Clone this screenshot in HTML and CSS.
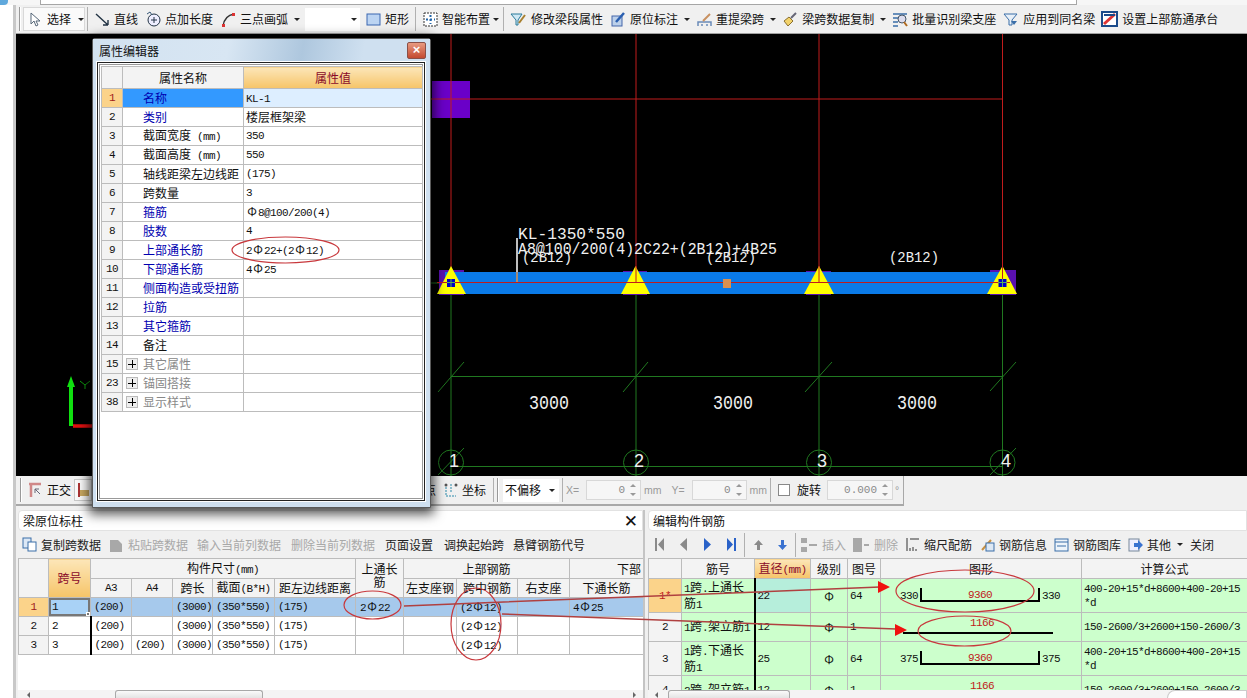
FILE: index.html
```html
<!DOCTYPE html>
<html lang="zh">
<head>
<meta charset="utf-8">
<title>属性编辑器</title>
<link rel="stylesheet" href="styles.css">
</head>
<body>
<div class="app">
  <div class="top"><span class="orb"></span><span class="topbox"></span></div>
  <div class="main">
    <div class="side"></div>
    <div class="content">

      <div class="tb">
        <span class="handle"></span>
        <span class="btn-select">
          <svg width="12" height="15" viewBox="0 0 12 15"><path d="M2 1v11l3-3 2 5 2-1-2-4h4z" fill="#fff" stroke="#567" /></svg>
          <span>选择</span><span class="caret"></span>
        </span>
        <span class="sep s1"></span>
        <span class="ti s0"><svg width="15" height="15" viewBox="0 0 15 15"><path d="M1 2l12 11M13 13V8M13 13H8" fill="none" stroke="#234" stroke-width="1.4"/></svg>直线</span>
        <span class="ti m8"><svg width="15" height="16" viewBox="0 0 15 16"><circle cx="8" cy="9" r="6" fill="#eef" stroke="#234"/><path d="M8 6v6M5 9h6" stroke="#234"/><path d="M1 3l3-2 2 3" fill="none" stroke="#357"/></svg>点加长度</span>
        <span class="ti m8"><svg width="15" height="15" viewBox="0 0 15 15"><path d="M2 14C3 7 7 3 13 2" fill="none" stroke="#333" stroke-width="1.3"/><rect x="1" y="12" width="3" height="3" fill="#d33"/><rect x="11" y="1" width="3" height="3" fill="#d33"/></svg>三点画弧</span>
        <span class="caret c6"></span>
        <span class="combo"><span class="caret"></span></span>
        <span class="ti m6"><svg width="15" height="13" viewBox="0 0 15 13"><rect x="1" y="1" width="13" height="11" fill="#bcd4f2" stroke="#3a66b0"/></svg>矩形</span>
        <span class="sep s6"></span>
        <span class="ti m7"><svg width="15" height="15" viewBox="0 0 15 15"><rect x="1" y="1" width="13" height="13" fill="#fff" stroke="#333" stroke-dasharray="2 1"/><path d="M7.500 3v9M3 7.500h9" stroke="#26a" stroke-width="2" stroke-dasharray="2 2"/></svg>智能布置</span>
        <span class="caret c3"></span>
        <span class="sep s4"></span>
        <span class="ti m6"><svg width="17" height="15" viewBox="0 0 17 15"><path d="M1 2h11L8 8v5H6V8z" fill="#cfe8f4" stroke="#2a7a9a"/><path d="M9 11l6-8" stroke="#a88030" stroke-width="2"/></svg>修改梁段属性</span>
        <span class="ti m8"><svg width="15" height="15" viewBox="0 0 15 15"><rect x="1" y="4" width="10" height="10" fill="#bcd0ea" stroke="#46a"/><path d="M5 10l8-9" stroke="#2a5fb0" stroke-width="2.500"/></svg>原位标注</span>
        <span class="caret c6"></span>
        <span class="ti"><svg width="15" height="15" viewBox="0 0 15 15"><path d="M1 14v-4h13v4M5 14v-2M10 14v-2" fill="none" stroke="#6a8ab8" stroke-width="1.500"/><path d="M6 9l7-7" stroke="#c89060" stroke-width="2"/></svg>重提梁跨</span>
        <span class="caret c6"></span>
        <span class="ti m6"><svg width="16" height="15" viewBox="0 0 16 15"><path d="M2 9l5-4 4 4-5 5z" fill="#f3d36b" stroke="#8a7030"/><path d="M9 6l5-5" stroke="#667" stroke-width="2"/></svg>梁跨数据复制</span>
        <span class="caret c6"></span>
        <span class="ti m6"><svg width="16" height="16" viewBox="0 0 16 16"><path d="M1 3h14M1 7h5M1 11h5M1 15h5" stroke="#3a6ea8" stroke-width="1.500"/><circle cx="10" cy="8" r="4" fill="#dde" stroke="#456"/><path d="M12 11l3 4" stroke="#b06a20" stroke-width="2"/></svg>批量识别梁支座</span>
        <span class="ti"><svg width="16" height="15" viewBox="0 0 16 15"><path d="M1 2h13L9 8v5H6V8z" fill="#e8f0f8" stroke="#3a6ea8"/><path d="M8 9h6l-3 4z" fill="#3a6ea8"/></svg>应用到同名梁</span>
        <span class="ti m6"><svg width="17" height="16" viewBox="0 0 17 16"><rect x="1" y="1" width="15" height="14" fill="#fff" stroke="#1a4a8a" stroke-width="2"/><path d="M3 13L14 3" stroke="#d33" stroke-width="3"/><path d="M3 4h11" stroke="#1a4a8a" stroke-width="2"/></svg>设置上部筋通承台</span>
      </div>

      <svg class="canvas" width="1231" height="442" viewBox="16 34 1231 442" font-family="Liberation Mono, monospace">
        <rect x="16" y="34" width="1231" height="442" fill="#000"/>
        <rect x="432" y="81" width="38" height="37" fill="#6a00c8"/>
        <path d="M451 34V283M636 34V283M819 34V283M1002.500 34V283M431 99H1003" stroke="#c01c1c" fill="none"/>
        <path d="M451 283V476M636 283V476M819 283V476M1002.500 283V476M451 376.500H1003M451 466.500H1003M431 283H439" stroke="#207820" fill="none"/>
        <path d="M438 392L464 362M623 392L648 362M805 392L832 362M990 391L1016 362M438 475L464 448M990 475L1016 448" stroke="#207820" fill="none"/>
        <g fill="none" stroke="#207820">
          <circle cx="451" cy="462.500" r="12.500"/><circle cx="636" cy="462.500" r="12.500"/><circle cx="819" cy="462.500" r="12.500"/><circle cx="1002.500" cy="462.500" r="12.500"/>
        </g>
        <g fill="#5a10b0">
          <rect x="439" y="270" width="25" height="25"/><rect x="623" y="271" width="24" height="24"/><rect x="806" y="271" width="25" height="24"/><rect x="990" y="270" width="26" height="25"/>
        </g>
        <rect x="445" y="272" width="558" height="22" fill="#0a7ae8"/>
        <path d="M439 282.500H1003" stroke="#c01c1c"/>
        <g fill="#ffff00">
          <path d="M451 266L437 294H466Z"/>
          <path d="M635.500 266L621 294H650Z"/>
          <path d="M819 266L804 294H834Z"/>
          <path d="M1002.500 266L987 294H1017Z"/>
        </g>
        <path d="M636 266V283M819 266V283M1002.500 266V279M437 282.500H1010" stroke="#c01c1c"/>
        <rect x="447" y="279" width="8" height="8" fill="#0000c8"/>
        <rect x="998.500" y="279" width="8" height="8" fill="#0000c8"/>
        <path d="M451 279V287M447 282.500H455M1002.500 279V287M998 282.500H1007" stroke="#58b058"/>
        <rect x="723" y="279" width="8" height="9" fill="#d89050"/>
        <path d="M517 238V272" stroke="#fff" stroke-width="1.500"/>
        <path d="M517 272V282" stroke="#d89050" stroke-width="1.500"/>
        <g fill="#f0f0f0">
          <text x="518" y="239" font-size="17" textLength="107" lengthAdjust="spacingAndGlyphs">KL-1350*550</text>
          <text x="518" y="254" font-size="16" textLength="259" lengthAdjust="spacingAndGlyphs">A8@100/200(4)2C22+(2B12)+4B25</text>
          <text x="522" y="262" font-size="15" textLength="50" lengthAdjust="spacingAndGlyphs">(2B12)</text>
          <text x="706" y="262" font-size="15" textLength="50" lengthAdjust="spacingAndGlyphs">(2B12)</text>
          <text x="889" y="262" font-size="15" textLength="50" lengthAdjust="spacingAndGlyphs">(2B12)</text>
          <text x="529" y="409" font-size="20" textLength="40" lengthAdjust="spacingAndGlyphs">3000</text>
          <text x="713" y="409" font-size="20" textLength="40" lengthAdjust="spacingAndGlyphs">3000</text>
          <text x="897" y="409" font-size="20" textLength="40" lengthAdjust="spacingAndGlyphs">3000</text>
          <text x="449" y="467" font-size="18" font-family="Liberation Sans, sans-serif">1</text>
          <text x="634" y="467" font-size="18" font-family="Liberation Sans, sans-serif">2</text>
          <text x="817" y="467" font-size="18" font-family="Liberation Sans, sans-serif">3</text>
          <text x="1001" y="467" font-size="18" font-family="Liberation Sans, sans-serif">4</text>
        </g>
        <path d="M71 426V384" stroke="#10e010" stroke-width="4"/>
        <path d="M71 376l-4 11h8z" fill="#10e010"/>
        <path d="M73 426H92" stroke="#e01010" stroke-width="3.500"/>
        <path d="M80 381l5 4 5-4M85 385v4" stroke="#10a010" fill="none"/>
      </svg>

      <div class="tb2">
        <span class="handle h2"></span>
        <span class="ti t2"><svg width="16" height="16" viewBox="0 0 16 16"><path d="M2 2h12M4 2v13" stroke="#d08888" stroke-width="2.500"/><path d="M8 7l5 5M8 7v4M8 7h4" stroke="#667" fill="none"/></svg>正交</span>
        <span class="mini"><svg width="14" height="16" viewBox="0 0 14 16"><path d="M3 1v14" stroke="#a33" stroke-width="2"/><rect x="4" y="8" width="9" height="6" fill="#c8a860"/></svg></span>
        <span class="hide">交点</span>
        <span class="ti t3"><svg width="15" height="16" viewBox="0 0 15 16"><path d="M3 5v9h10M8 2v8" stroke="#2a8aaa" stroke-dasharray="2 1" fill="none"/><circle cx="3" cy="3" r="1.500" fill="#555"/><circle cx="13" cy="3" r="1.500" fill="#555"/></svg>坐标</span>
        <span class="sep s7"></span>
        <span class="handle h3"></span>
        <span class="combo c2">不偏移<span class="caret"></span></span>
        <span class="sep s3"></span>
        <span class="dim lx">X=</span>
        <span class="spin sx"><span class="val">0</span><span class="arrows"></span></span>
        <span class="dim">mm</span>
        <span class="dim ly">Y=</span>
        <span class="spin sy"><span class="val">0</span><span class="arrows"></span></span>
        <span class="dim">mm</span>
        <span class="sep s3b"></span>
        <span class="check"></span>
        <span class="rot">旋转</span>
        <span class="spin sr"><span class="val">0.000</span><span class="arrows"></span></span>
        <span class="dim deg">°</span>
      </div>

      <div class="panels">
        <section class="panel pl">
          <div class="title"><span>梁原位标柱</span><b class="x">✕</b></div>
          <div class="ptb">
            <span class="ti"><svg width="15" height="15" viewBox="0 0 15 15"><rect x="1" y="1" width="8" height="10" fill="#dce8f6" stroke="#3a6ea8"/><rect x="6" y="5" width="8" height="9" fill="#fff" stroke="#3a6ea8"/></svg>复制跨数据</span>
            <span class="ti off m7"><svg width="16" height="15" viewBox="0 0 16 15"><path d="M2 3h8l4 4v8H2z" fill="#a8a8a8"/></svg>粘贴跨数据</span>
            <span class="ti off m9">输入当前列数据</span>
            <span class="ti off m10">删除当前列数据</span>
            <span class="ti m10">页面设置</span>
            <span class="ti m11">调换起始跨</span>
            <span class="ti m9">悬臂钢筋代号</span>
          </div>
          <div class="grid-wrap">
            <table class="grid tl">
              <colgroup><col class="l0"><col class="l1"><col class="l2"><col class="l3"><col class="l4"><col class="l5"><col class="l6"><col class="l7"><col class="l8"><col class="l9"><col class="l10"><col class="l11"></colgroup>
              <thead>
                <tr class="h20">
                  <th rowspan="2"></th><th rowspan="2" class="hot">跨号</th>
                  <th colspan="5">构件尺寸<span class="n">(mm)</span></th>
                  <th rowspan="2" class="wrap">上通长<br>筋</th>
                  <th colspan="3">上部钢筋</th>
                  <th class="right">下部</th>
                </tr>
                <tr>
                  <th class="n">A3</th><th class="n">A4</th><th>跨长</th><th>截面<span class="n">(B*H)</span></th><th>距左边线距离</th>
                  <th>左支座钢</th><th>跨中钢筋</th><th>右支座</th><th>下通长筋</th>
                </tr>
              </thead>
              <tbody>
                <tr class="sel">
                  <td class="rn on">1</td><td class="n cur">1<i class="knob"></i></td><td class="n">(200)</td><td></td><td class="n">(3000)</td><td class="n">(350*550)</td><td class="n">(175)</td>
                  <td class="n"><span class="in">2<i class="g">Φ</i>22</span></td><td></td><td class="n">(2<i class="g">Φ</i>12)</td><td></td><td class="n">4<i class="g">Φ</i>25</td>
                </tr>
                <tr>
                  <td class="rn">2</td><td class="n fz">2</td><td class="n">(200)</td><td></td><td class="n">(3000)</td><td class="n">(350*550)</td><td class="n">(175)</td>
                  <td></td><td></td><td class="n">(2<i class="g">Φ</i>12)</td><td></td><td></td>
                </tr>
                <tr>
                  <td class="rn">3</td><td class="n fz">3</td><td class="n">(200)</td><td class="n">(200)</td><td class="n">(3000)</td><td class="n">(350*550)</td><td class="n">(175)</td>
                  <td></td><td></td><td class="n">(2<i class="g">Φ</i>12)</td><td></td><td></td>
                </tr>
              </tbody>
            </table>
          </div>
          <div class="sb sbl"><span class="thumb"></span></div>
        </section>

        <section class="panel pr">
          <div class="title t-r"><span>编辑构件钢筋</span></div>
          <div class="ptb ptb-r">
            <svg class="nav n1" width="9" height="13" viewBox="0 0 9 13"><path d="M0 0h2v13H0zM9 0v13L3 6.500z" fill="#8a8a8a"/></svg>
            <svg class="nav n2" width="7" height="13" viewBox="0 0 7 13"><path d="M7 0v13L0 6.500z" fill="#8a8a8a"/></svg>
            <svg class="nav n3" width="7" height="13" viewBox="0 0 7 13"><path d="M0 0v13l7-6.500z" fill="#2a62c8"/></svg>
            <svg class="nav n4" width="9" height="13" viewBox="0 0 9 13"><path d="M0 0v13l6-6.500zM7 0h2v13H7z" fill="#2a62c8"/></svg>
            <span class="sep s8"></span>
            <svg class="nav n5" width="9" height="10" viewBox="0 0 9 10"><path d="M4.500 0L9 5H6v5H3V5H0z" fill="#8a8a8a"/></svg>
            <svg class="nav n6" width="9" height="10" viewBox="0 0 9 10"><path d="M4.500 10L9 5H6V0H3v5H0z" fill="#3a72d0"/></svg>
            <span class="sep s8"></span>
            <span class="ti off m5"><svg width="17" height="14" viewBox="0 0 17 14"><path d="M0 0h6v5H0zM0 9h6v5H0zM8 6h8v2H8z" fill="#a8a8a8"/></svg>插入</span>
            <span class="ti off"><svg width="17" height="14" viewBox="0 0 17 14"><path d="M0 0h9v14H0zM11 6h5v2h-5z" fill="#a8a8a8"/></svg>删除</span>
            <span class="ti m8b"><svg width="14" height="15" viewBox="0 0 14 15"><path d="M1 1v13M4 14v-3M7 14v-4M10 14v-2M4 2h9" stroke="#333" fill="none"/></svg>缩尺配筋</span>
            <span class="ti m8b"><svg width="15" height="15" viewBox="0 0 15 15"><path d="M2 13L11 3" stroke="#c89040" stroke-width="2"/><rect x="6" y="6" width="8" height="8" fill="#dde8f4" stroke="#3a6ea8"/></svg>钢筋信息</span>
            <span class="ti"><svg width="15" height="14" viewBox="0 0 15 14"><rect x="1" y="1" width="13" height="12" fill="#eef4fa" stroke="#3a6ea8"/><path d="M1 4h13M3 8h9" stroke="#3a6ea8"/></svg>钢筋图库</span>
            <span class="ti"><svg width="15" height="14" viewBox="0 0 15 14"><rect x="1" y="1" width="10" height="12" fill="#eef" stroke="#789"/><path d="M6 5h4V2l5 5-5 5V9H6z" fill="#3a72d0"/></svg>其他</span>
            <span class="caret c6"></span>
            <span class="ti m7">关闭</span>
          </div>
          <div class="grid-wrap">
            <table class="grid tr-g">
              <colgroup><col class="r0"><col class="r1"><col class="r2"><col class="r3"><col class="r4"><col class="r5"><col class="r6"></colgroup>
              <thead>
                <tr class="h20"><th></th><th>筋号</th><th class="hot">直径<span class="n">(mm)</span></th><th>级别</th><th>图号</th><th>图形</th><th>计算公式</th></tr>
              </thead>
              <tbody class="green">
                <tr class="r34">
                  <td class="rn on red">1*</td><td class="lab"><span class="n">1</span>跨<span class="n">.</span>上通长<br>筋<span class="n">1</span></td><td class="n dia act">22</td><td class="ctr"><i class="g">Φ</i></td><td class="n">64</td>
                  <td><div class="fig"><span class="n">330</span><span class="bar">9360</span><span class="n">330</span></div></td>
                  <td class="n f">400-20+15*d+8600+400-20+15<br>*d</td>
                </tr>
                <tr class="r29">
                  <td class="rn">2</td><td class="lab"><span class="n">1</span>跨<span class="n">.</span>架立筋<span class="n">1</span></td><td class="n dia">12</td><td class="ctr"><i class="g">Φ</i></td><td class="n">1</td>
                  <td><div class="line">1166</div></td>
                  <td class="n f">150-2600/3+2600+150-2600/3</td>
                </tr>
                <tr class="r34">
                  <td class="rn">3</td><td class="lab"><span class="n">1</span>跨<span class="n">.</span>下通长<br>筋<span class="n">1</span></td><td class="n dia">25</td><td class="ctr"><i class="g">Φ</i></td><td class="n">64</td>
                  <td><div class="fig"><span class="n">375</span><span class="bar">9360</span><span class="n">375</span></div></td>
                  <td class="n f">400-20+15*d+8600+400-20+15<br>*d</td>
                </tr>
                <tr class="r29">
                  <td class="rn">4</td><td class="lab"><span class="n">2</span>跨<span class="n">.</span>架立筋<span class="n">1</span></td><td class="n dia">12</td><td class="ctr"><i class="g">Φ</i></td><td class="n">1</td>
                  <td><div class="line">1166</div></td>
                  <td class="n f">150-2600/3+2600+150-2600/3</td>
                </tr>
              </tbody>
            </table>
          </div>
          <div class="sb sbr"><span class="thumb"></span><span class="cap"></span></div>
        </section>
      </div>
    </div>
  </div>

  <div class="dialog">
    <div class="dlg-title"><span>属性编辑器</span><b class="close">×</b></div>
    <div class="dlg-frame">
      <table class="props">
        <colgroup><col class="p0"><col class="p1"><col class="p2"></colgroup>
        <thead><tr><th></th><th class="ctr-h">属性名称</th><th class="hot">属性值</th></tr></thead>
        <tbody>
          <tr class="sel-p"><td class="rn on">1</td><td class="nm blue">名称</td><td class="vl"><span class="n">KL-1</span></td></tr>
          <tr><td class="rn">2</td><td class="nm blue">类别</td><td class="vl">楼层框架梁</td></tr>
          <tr><td class="rn">3</td><td class="nm">截面宽度<span class="n"> (mm)</span></td><td class="vl n">350</td></tr>
          <tr><td class="rn">4</td><td class="nm">截面高度<span class="n"> (mm)</span></td><td class="vl n">550</td></tr>
          <tr><td class="rn">5</td><td class="nm">轴线距梁左边线距</td><td class="vl n"> (175)</td></tr>
          <tr><td class="rn">6</td><td class="nm">跨数量</td><td class="vl n">3</td></tr>
          <tr><td class="rn">7</td><td class="nm blue">箍筋</td><td class="vl n"><i class="g">Φ</i>8@100/200(4)</td></tr>
          <tr><td class="rn">8</td><td class="nm blue">肢数</td><td class="vl n">4</td></tr>
          <tr><td class="rn">9</td><td class="nm blue">上部通长筋</td><td class="vl n">2<i class="g">Φ</i>22+(2<i class="g">Φ</i>12)</td></tr>
          <tr><td class="rn">10</td><td class="nm blue">下部通长筋</td><td class="vl n">4<i class="g">Φ</i>25</td></tr>
          <tr><td class="rn">11</td><td class="nm blue">侧面构造或受扭筋</td><td class="vl"></td></tr>
          <tr><td class="rn">12</td><td class="nm blue">拉筋</td><td class="vl"></td></tr>
          <tr><td class="rn">13</td><td class="nm blue">其它箍筋</td><td class="vl"></td></tr>
          <tr><td class="rn">14</td><td class="nm">备注</td><td class="vl"></td></tr>
          <tr><td class="rn">15</td><td class="nm grey"><i class="plus"></i>其它属性</td><td class="vl"></td></tr>
          <tr><td class="rn">23</td><td class="nm grey"><i class="plus"></i>锚固搭接</td><td class="vl"></td></tr>
          <tr><td class="rn">38</td><td class="nm grey"><i class="plus"></i>显示样式</td><td class="vl"></td></tr>
        </tbody>
      </table>
    </div>
  </div>

  <svg class="marks" width="1247" height="698" viewBox="0 0 1247 698">
    <g fill="none" stroke="#c8383c" stroke-width="1.200">
      <ellipse cx="285.500" cy="250" rx="53.500" ry="13"/>
      <ellipse cx="372.500" cy="605" rx="28.500" ry="14"/>
      <ellipse cx="476" cy="624" rx="25" ry="36"/>
      <ellipse cx="965" cy="591" rx="69" ry="21"/>
      <ellipse cx="964.500" cy="631" rx="46.500" ry="15"/>
    </g>
    <path d="M404 606L880 587M502 614L896 629" fill="none" stroke="#b04040" stroke-width="1.500"/>
    <path d="M890 587L878 581V593ZM907 630L895 624V636Z" fill="#f01010"/>
  </svg>
</div>
</body>
</html>
```
FILE: styles.css
```css
* { box-sizing: border-box; }
html, body { margin: 0; padding: 0; background: #f0f0f0; }
body { font: 12px/14px "Noto Sans CJK SC", "Liberation Sans", sans-serif; color: #111; }
.app { position: relative; width: 1247px; height: 698px; overflow: hidden; display: flex; flex-direction: column; }

.top { height: 5px; flex: none; display: flex; background: #f6f6f6; }
.orb { width: 8px; height: 5px; background: #5fa8dc; border-radius: 0 0 4px 0; }
.topbox { width: 1037px; margin-left: 32px; height: 5px; border: solid #a6a6a6; border-width: 0 1px 1px; background: #fff; }

.main { flex: 1; display: flex; min-height: 0; }
.side { width: 16px; flex: none; background: #fff; border-right: 3px solid #c8c8c8; }
.content { flex: 1; min-width: 0; display: flex; flex-direction: column; }

.tb { height: 29px; flex: none; display: flex; align-items: center; padding-left: 3px; background: #f0f0f0; border-bottom: 1px solid #a0a0a0; white-space: nowrap; }
.handle { width: 2px; height: 24px; border-left: 1px solid #999; border-right: 1px solid #fff; flex: none; }
.btn-select { display: flex; align-items: center; width: 62px; height: 24px; margin-left: 2px; padding-left: 5px; gap: 6px; background: #fafafa; border: 1px solid #d8d8d8; flex: none; }
.caret { width: 0; height: 0; border: 3px solid transparent; border-top: 3px solid #222; border-bottom: 0; flex: none; display: inline-block; }
.btn-select .caret { margin-left: 1px; }
.sep { width: 1px; height: 24px; background: #b0b0b0; flex: none; }
.s1 { margin-left: 2px; }
.s0 { margin-left: 7px; }
.s6 { margin-left: 6px; }
.s4 { margin-left: 4px; }
.ti { display: flex; align-items: center; gap: 4px; margin-left: 7px; flex: none; }
.m6 { margin-left: 6px; }
.m8 { margin-left: 8px; }
.c6 { margin-left: 6px; }
.c3 { margin-left: 3px; }
.combo { width: 55px; height: 23px; margin-left: 5px; display: flex; align-items: center; justify-content: flex-end; padding-right: 3px; background: #fff; flex: none; }

.canvas { display: block; flex: none; }

.tb2 { height: 30px; flex: none; display: flex; align-items: center; padding-left: 4px; border-bottom: 2px solid #a8a8a8; width: 888px; border-right: 1px solid #a8a8a8; white-space: nowrap; }
.h2 { height: 24px; }
.t2 { margin-left: 5px; }
.mini { width: 18px; height: 22px; margin-left: 3px; border: 1px solid #c8c8c8; background: #fafafa; display: flex; align-items: center; justify-content: center; flex: none; }
.hide { margin-left: 320px; width: 24px; flex: none; }
.t3 { margin-left: 7px; }
.s7 { margin-left: 7px; }
.h3 { margin-left: 3px; }
.c2 { width: 56px; margin-left: 4px; justify-content: space-between; padding: 0 4px 0 2px; }
.s3 { margin-left: 3px; }
.dim { color: #999; font: 10.500px/14px "Liberation Sans", sans-serif; margin-left: 3px; flex: none; }
.lx { width: 17px; }
.ly { margin-left: 10px; width: 17px; }
.spin { height: 20px; margin-left: 3px; border: 1px solid #d8d8d8; background: #f6f6f6; display: flex; align-items: center; justify-content: flex-end; color: #8a8a8a; font: 11px/14px "Liberation Mono", monospace; flex: none; }
.arrows { position: relative; width: 7px; height: 12px; margin: 0 3px 0 5px; }
.arrows::before, .arrows::after { content: ""; position: absolute; left: 0; border: 3.500px solid transparent; }
.arrows::before { top: -3px; border-bottom-color: #999; }
.arrows::after { bottom: -3px; border-top-color: #999; }
.sx { width: 55px; }
.sy { width: 55px; }
.sr { width: 66px; margin-left: 6px; }
.s3b { margin-left: 3px; }
.check { width: 12px; height: 12px; border: 1px solid #888; background: #fff; margin-left: 7px; flex: none; }
.rot { margin-left: 7px; flex: none; }
.deg { margin-left: 2px; }

.panels { flex: 1; min-height: 0; display: flex; padding-top: 4px; }
.panel { display: flex; flex-direction: column; min-width: 0; }
.pl { width: 629px; flex: none; padding-left: 2px; border-right: 2px solid #c4c4c4; }
.pr { flex: 1; padding-left: 3px; }
.title { height: 21px; flex: none; display: flex; align-items: center; justify-content: space-between; padding: 0 4px; background: #fff; border: 1px solid #e2e2e2; border-radius: 4px 0 0 4px; }
.x { font: bold 17px/14px "DejaVu Sans", sans-serif; color: #111; margin-right: 0; }
.ptb { height: 27px; flex: none; display: flex; align-items: center; padding-left: 4px; white-space: nowrap; color: #222; }
.ptb .ti:first-child { margin-left: 0; }
.off { color: #a8a8a8; }
.m7 { margin-left: 7px; }
.m9 { margin-left: 9px; }
.m10 { margin-left: 10px; }
.m11 { margin-left: 11px; }
.m5 { margin-left: 5px; }
.m8b { margin-left: 8px; }
.nav { flex: none; }
.n1 { margin-left: 3px; }
.n2 { margin-left: 16px; }
.n3 { margin-left: 17px; }
.n4 { margin-left: 16px; }
.s8 { margin-left: 8px; }
.n5 { margin-left: 9px; }
.n6 { margin-left: 15px; }

.grid-wrap { flex: 1; min-height: 0; overflow: hidden; background: #fff; }
table { border-collapse: collapse; table-layout: fixed; }
td, th { padding: 0; height: 19px; border: 1px solid #bcbcbc; overflow: hidden; white-space: nowrap; font-weight: 400; }
th { background: #f3f3f3; text-align: center; line-height: 14px; }
.h20 th { height: 20px; }
.hot { background: linear-gradient(#fce6b8, #f6c468); color: #8a0a2a; }
.tl { width: 625px; }
.tr-g { width: 599px; }
.n { font: 11px/14px "Liberation Mono", monospace; letter-spacing: -0.6px; }
.g { font: normal 12px/14px "Noto Sans CJK SC", sans-serif; display: inline-block; width: 12px; text-align: center; letter-spacing: 0; }
.rn { font: 11px/14px "Liberation Mono", monospace; letter-spacing: -0.6px; text-align: center; background: #f3f3f3; }
.on { background: #fbd38a; color: #a0201a; }
.l0 { width: 30px; } .l1 { width: 42px; } .l2 { width: 41px; } .l3 { width: 41px; } .l4 { width: 40px; } .l5 { width: 62px; } .l6 { width: 81px; } .l7 { width: 48px; } .l8 { width: 53px; } .l9 { width: 61px; } .l10 { width: 52px; } .l11 { width: 74px; }
.tl td { padding-left: 3px; }
.tl td.rn { padding-left: 0; }
.wrap { line-height: 13px; vertical-align: top; padding-top: 3px; }
.right { text-align: right; padding-right: 2px; }
.sel td { background: #a6c9ec; }
.sel td.rn { background: #fbd38a; }
.sel td.cur { position: relative; background: #a9d2f6; box-shadow: inset 0 0 0 2px #777; }
.knob { position: absolute; right: 0; bottom: 0; width: 4px; height: 4px; background: #777; border: 1px solid #fff; }
.fz { border-right: 2px solid #000; }
.in { padding-left: 1px; }

.r0 { width: 33px; } .r1 { width: 73px; } .r2 { width: 56px; } .r3 { width: 37px; } .r4 { width: 33px; } .r5 { width: 201px; } .r6 { width: 166px; }
.green td { background: #ccffcc; padding-left: 2px; vertical-align: middle; }
.green td.rn { background: #f3f3f3; padding-left: 0; }
.green td.on { background: #fbd38a; }
.red { color: #c0201a; }
.lab { line-height: 14px; }
.dia { border-left: 2px solid #000; }
.green td.act { background: #b6eedb; }
.ctr { text-align: center; padding-left: 0; }
.green td.ctr { padding-left: 0; }
.r34 td { height: 34px; }
.r29 td { height: 29px; }
.fig { display: flex; align-items: center; justify-content: center; gap: 2px; padding-right: 4px; }
.bar { width: 120px; height: 14px; margin-bottom: 1px; border: solid #000; border-width: 0 2px 2px; text-align: center; color: #c0201a; font: 11px/14px "Liberation Mono", monospace; letter-spacing: -0.6px; }
.line { width: 150px; height: 18px; margin: 0 0 4px 20px; border-bottom: 2px solid #000; text-align: center; color: #c0201a; font: 11px/14px "Liberation Mono", monospace; letter-spacing: -0.6px; padding-left: 8px; }
.f { padding-left: 2px; }

.sb { height: 8px; flex: none; background: #f4f4f4; display: flex; position: relative; overflow: hidden; }
.sb::before, .sb::after { content: ""; position: absolute; top: 2px; border: 3px solid transparent; }
.sbl::before { left: 6px; border-right-color: #666; }
.sbl::after { right: 4px; border-left-color: #666; }
.sbr::before { left: 4px; border-right-color: #666; }
.thumb { display: block; height: 8px; background: linear-gradient(#fafafa, #e4e4e4); border: 1px solid #a8a8a8; border-bottom: 0; border-radius: 3px 3px 0 0; }
.sbl .thumb { width: 148px; margin-left: 97px; }
.sbr .thumb { width: 122px; margin-left: 20px; }
.cap { width: 80px; margin-left: auto; background: #fff; border: 1px solid #ccc; border-bottom: 0; border-radius: 9px 0 0 0; }

.dialog { position: absolute; left: 92px; top: 38px; width: 339px; height: 470px; z-index: 5; background: #cfe0f0; border: 1px solid #5a5a5a; border-radius: 3px 3px 0 0; box-shadow: 0 3px 12px 3px rgba(0, 0, 0, 0.7); display: flex; flex-direction: column; padding: 0 5px 6px 4px; }
.dlg-title { height: 23px; margin: 0 -5px 0 -4px; padding: 0 4px 0 6px; flex: none; display: flex; align-items: center; justify-content: space-between; background: linear-gradient(100deg, #d2e2f0, #d8e6f3 40%, #aec7de 62%, #cfe0f0 80%); }
.close { width: 19px; height: 17px; border-radius: 2px; border: 1px solid #8a5048; background: linear-gradient(#e89a80, #c44a30); color: #fff; font: bold 13px/14px "Liberation Sans", sans-serif; text-align: center; }
.dlg-frame { flex: 1; background: #fff; border: 1px solid #222; outline: 1px solid #fff; box-shadow: inset 0 0 0 1px #fff, inset 0 0 0 2px #999; padding: 3px 0 0 3px; }
.props { width: 321px; }
.p0 { width: 21px; } .p1 { width: 121px; } .p2 { width: 179px; }
.props thead th { height: 22px; }
.props td { height: 19px; }
.ctr-h { color: #111; }
.nm { padding-left: 20px; position: relative; }
.blue { color: #0000b0; }
.grey { color: #888; }
.vl { padding-left: 2px; }
.sel-p .nm { background: #3399ff; }
.sel-p .vl { background: #ddeeff; }
.plus { position: absolute; left: 3px; top: 3px; width: 12px; height: 12px; border: 1px solid #bbb; background: linear-gradient(#000, #000) center / 8px 1px no-repeat, linear-gradient(#000, #000) center / 1px 8px no-repeat, #eee; }

.marks { position: absolute; left: 0; top: 0; z-index: 6; pointer-events: none; }
```
